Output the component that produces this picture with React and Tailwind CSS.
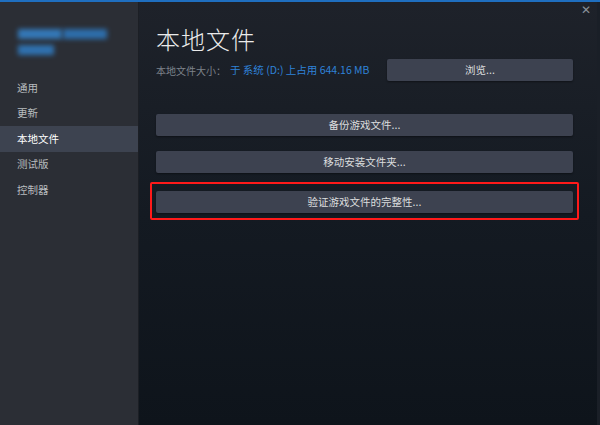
import React from 'react';

const navItems = ['通用', '更新', '本地文件', '测试版', '控制器'];

const ActionButton = ({ label, className = '' }) => (
    <button className={`h-[22px] w-full bg-[#3d4250] text-[10.5px] text-[#dcdedf] rounded-[2px] shadow-[0_1px_2px_rgba(0,0,0,0.4)] whitespace-nowrap ${className}`}>
        {label}
    </button>
);

const App = () => {
    return (
        <div
            className="w-[600px] h-[425px] flex flex-col bg-[#0e141b] overflow-hidden"
            style={{ fontFamily: '"Noto Sans CJK SC", "Noto Sans", sans-serif' }}
        >
            {/* top accent line */}
            <div className="h-[2px] bg-[#1f6fc0] shrink-0"></div>

            <div className="flex flex-1 min-h-0">
                {/* Sidebar */}
                <div className="w-[139px] shrink-0 bg-[#2b2e35] border-r border-[#1c1f25] flex flex-col">
                    {/* blurred game name */}
                    <div className="pt-[27px] pl-[18px] h-[73px] flex flex-col gap-[6px]">
                        <div className="flex gap-[1px]">
                            <div className="w-[44px] h-[10px] bg-[#3580c6] blur-[2.5px] rounded-[1px] opacity-90"></div>
                            <div className="w-[44px] h-[10px] bg-[#2e75b8] blur-[2.5px] rounded-[1px] opacity-90"></div>
                        </div>
                        <div className="w-[36px] h-[10px] bg-[#3079bd] blur-[2.5px] rounded-[1px] opacity-90"></div>
                    </div>
                    <div className="flex flex-col">
                        {navItems.map(item => (
                            <div
                                key={item}
                                className={`h-[25.5px] flex items-center pl-[17px] text-[10.5px] ${item === '本地文件' ? 'bg-[#3d4350] text-white' : 'text-[#b8bcbf]'}`}
                            >
                                {item}
                            </div>
                        ))}
                    </div>
                </div>

                {/* Main panel */}
                <div className="relative flex-1 bg-gradient-to-b from-[#1e222a] via-[#141a22] to-[#0e141b] border-r-[3px] border-[#1a1f27]">
                    <div className="absolute top-[1px] right-[6px] text-[#8a9099] text-[12px] leading-none">✕</div>

                    <div className="pl-[17px] pr-[24px] pt-[22px] flex flex-col">
                        <h1 className="text-[24px] font-light text-[#ebebeb] leading-[30px] tracking-[1px]">本地文件</h1>

                        <div className="mt-[5px] flex items-center h-[22px] whitespace-nowrap">
                            <span className="text-[10px] text-[#7d838b]">本地文件大小：</span>
                            <span className="ml-[4px] text-[10.5px] text-[#2f82d8]">于 系统 (D:) 上占用 644.16 MB</span>
                            <ActionButton label="浏览..." className="!w-[186px] ml-auto" />
                        </div>

                        <div className="mt-[33px] flex flex-col gap-[15px]">
                            <ActionButton label="备份游戏文件..." />
                            <ActionButton label="移动安装文件夹..." />
                        </div>

                        <div className="mt-[9px] -mx-[6px] px-[4px] pt-[3px] pb-[5px] border-2 border-[#ff1a1a] rounded-[2px]">
                            <ActionButton label="验证游戏文件的完整性..." />
                        </div>
                    </div>
                </div>
            </div>
        </div>
    );
};

export default App;
